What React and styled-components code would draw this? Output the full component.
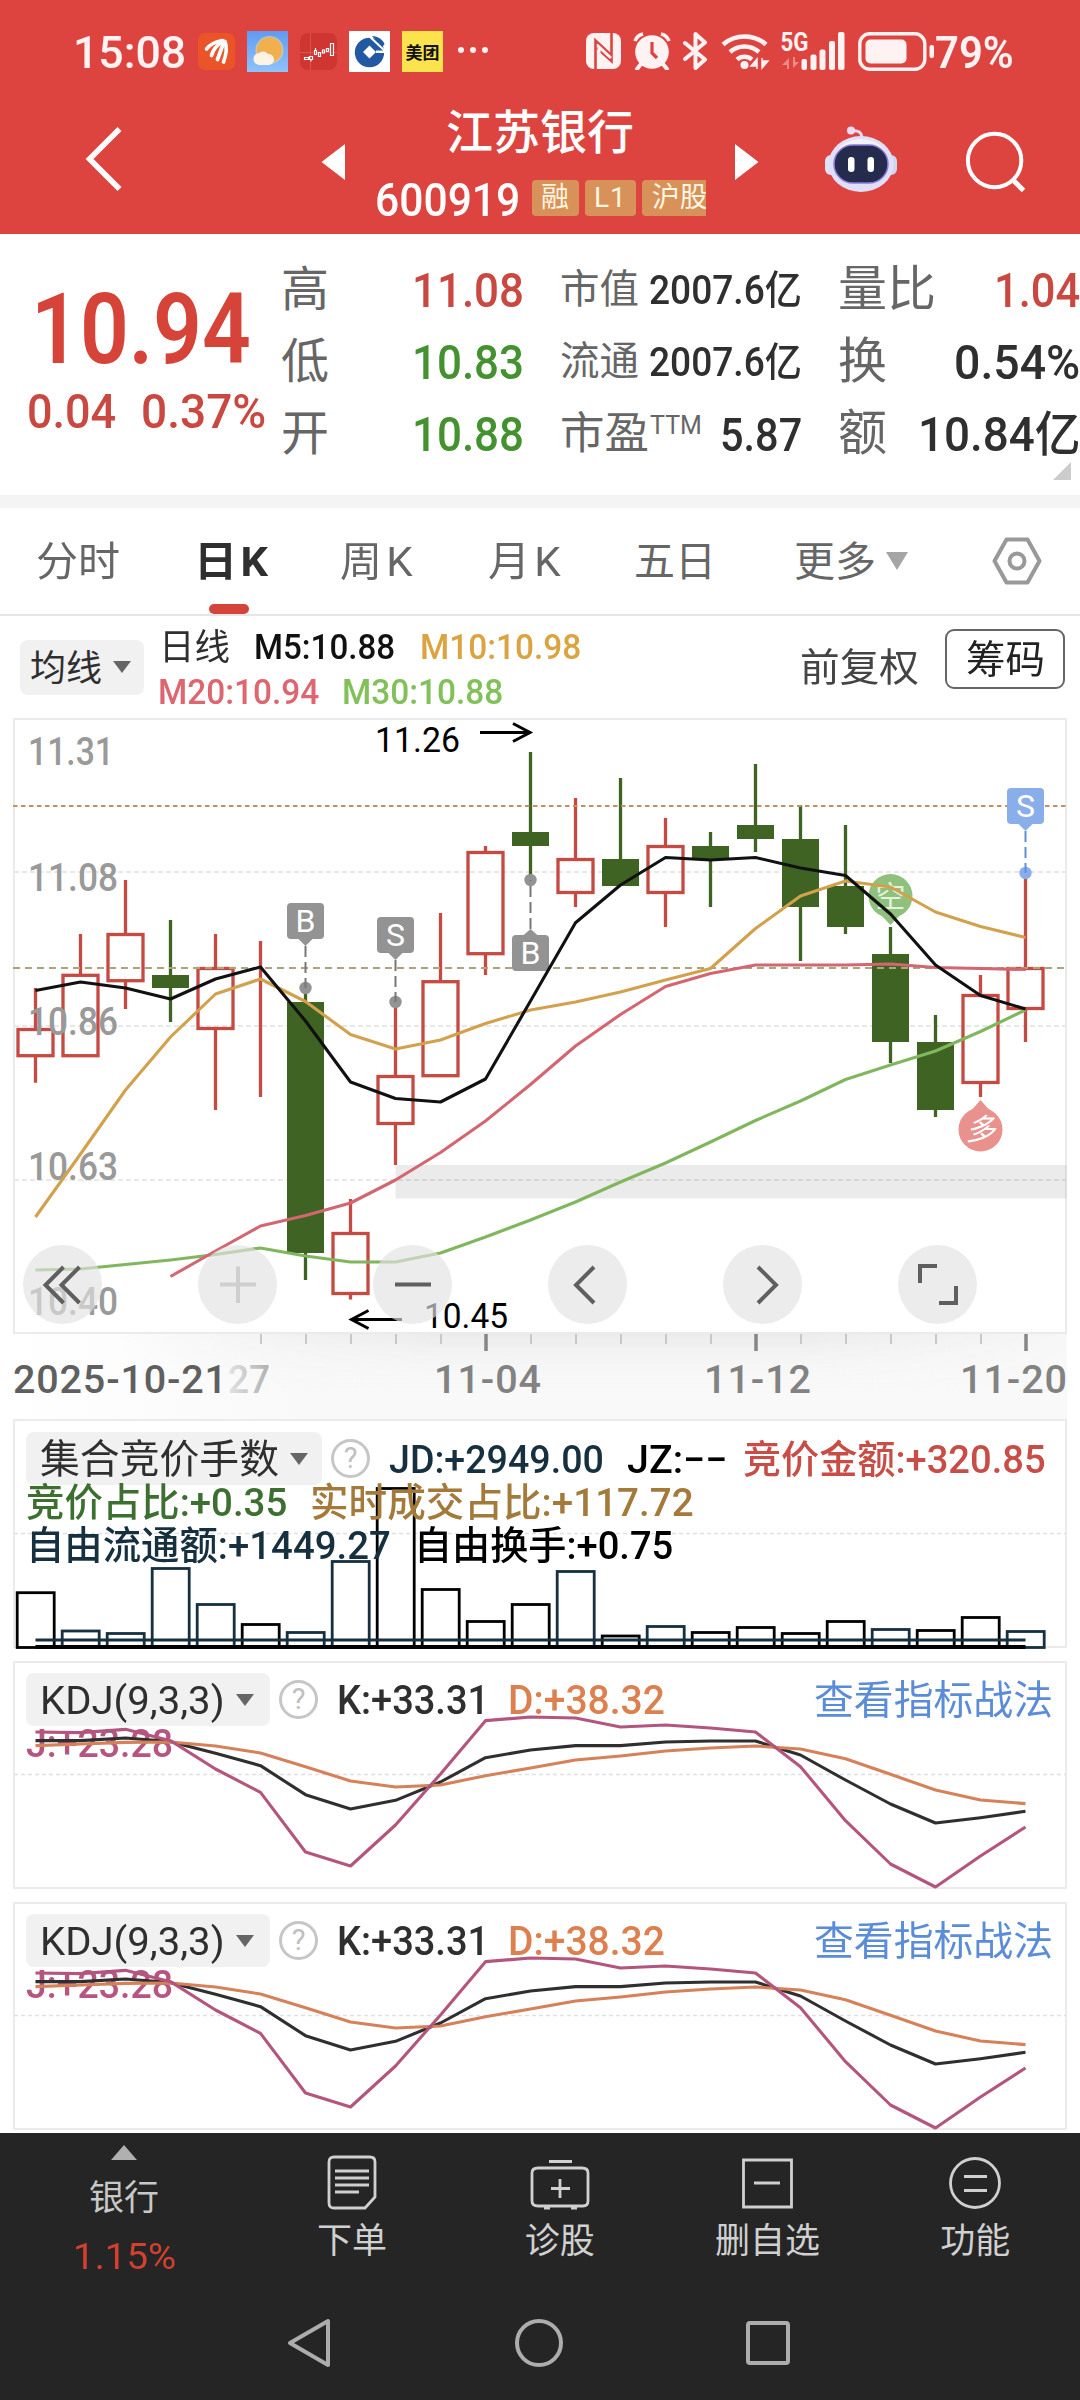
import React, { useLayoutEffect, useRef, useState } from 'react';
import styled, { createGlobalStyle } from 'styled-components';

const FONT = 'Roboto, "Noto Sans CJK SC", sans-serif';

const GlobalStyle = createGlobalStyle`
  * {
    box-sizing: border-box;
  }

  body {
    margin: 0;
    background: #fff;
    font-family: ${FONT};
  }

  svg {
    display: block;
    flex: none;
  }

  svg text {
    font-family: ${FONT};
  }
`;

const Page = styled.div`
  display: flex;
  flex-direction: column;
  width: 1080px;
  height: 2400px;
  overflow: hidden;
  background: #fff;
`;

/* ---------- Fitted text ---------- */

const FitBox = styled.span`
  display: block;
  flex: none;
  width: ${(p) => p.$w}px;
  margin-left: ${(p) => p.$ml || 0}px;
  padding-top: 3px;
  color: ${(p) => p.$color || 'inherit'};
  font-size: ${(p) => p.$size}px;
  font-weight: ${(p) => p.$weight || 400};
  letter-spacing: ${(p) => p.$ls || 0}px;
  line-height: ${(p) => p.$lh || p.$size}px;
  white-space: nowrap;
`;

const FitInner = styled.span`
  display: inline-block;
  transform-origin: left center;
`;

// Text squeezed or stretched horizontally so it always takes the given width
const Fit = ({ w, children, ...rest }) => {
  const ref = useRef(null);
  const [scale, setScale] = useState(1);

  useLayoutEffect(() => {
    setScale(w / ref.current.offsetWidth);
  }, [w, children]);

  return (
    <FitBox $w={w} {...rest}>
      <FitInner ref={ref} style={{ transform: `scaleX(${scale})` }}>
        {children}
      </FitInner>
    </FitBox>
  );
};

/* ---------- Status bar ---------- */

const Header = styled.header`
  flex: none;
  height: 234px;
  background: #dd4440;
  color: #fff;
`;

const StatusBar = styled.div`
  display: flex;
  align-items: center;
  justify-content: space-between;
  height: 102px;
  padding: 0 66px 0 73px;
  color: #fff2f2;
`;

const StatusGroup = styled.div`
  display: flex;
  align-items: center;
  gap: ${(p) => p.$gap}px;
`;

const AppBadge = styled.span`
  display: flex;
  align-items: center;
  justify-content: center;
  width: ${(p) => p.$size}px;
  height: ${(p) => p.$size}px;
  border-radius: ${(p) => p.$radius || 0}px;
  background: ${(p) => p.$bg};
  color: #111;
  font-size: 17px;
  font-weight: 700;
`;

const AppIcons = () => (
  <>
    <AppBadge $size={37} $radius={7} $bg="#eb5328">
      <svg width="37" height="37" viewBox="0 0 37 37" fill="none" stroke="#fff" strokeLinecap="round">
        <path d="M8.500 16C12 11 17 9 24 7.500" strokeWidth="3.600" />
        <path d="M13.500 22.500C15 16.500 19 12 25 8" strokeWidth="3.800" />
        <path d="M19.500 26.500C22 20 24 14 26 8.500" strokeWidth="3.800" />
        <path d="M25.500 29C28.500 21 29.500 15 27 8.500" strokeWidth="3.600" />
      </svg>
    </AppBadge>
    <AppBadge $size={41} $bg="linear-gradient(#5f9bf2, #8fc3fb)">
      <svg width="41" height="41" viewBox="0 0 41 41">
        <circle cx="22.500" cy="19" r="14" fill="#f6d58f" opacity="0.6" />
        <circle cx="22.500" cy="19" r="12.500" fill="#f0b04f" />
        <path d="M13 34a6 6 0 0 1-1-12 6 6 0 0 1 9 1 5.500 5.500 0 1 1 1 11z" fill="#fdf3e4" />
      </svg>
    </AppBadge>
    <AppBadge $size={37} $radius={8} $bg="#cf3531">
      <svg width="37" height="37" viewBox="0 0 37 37" fill="none" stroke="#fff" strokeWidth="1.200">
        <path d="M0 19.500h37M10.500 0v37" stroke="#e0605c" strokeWidth="0.700" />
        <path d="M4.500 24.500h4v2h-4zM9.500 23.500h3v3h-3zM11 26.500v2M14.500 17.500h2v4h-2zM15.500 15v2M18.500 19.500h2v4h-2zM22.500 17h2v3h-2zM26.500 15.500h2v3h-2zM30.500 10.500h3v12h-3z" />
      </svg>
    </AppBadge>
    <AppBadge $size={41} $bg="#fff">
      <svg width="41" height="41" viewBox="0 0 41 41">
        <circle cx="20.500" cy="21.500" r="14.700" fill="#2359a3" />
        <path d="M20.500 14.500l6.500 6.500-6.500 6.500-6.500-6.500zM27 19.500h10v2.500h-10z" fill="#fff" />
        <path d="M19.500 4.500l16 15" stroke="#fff" strokeWidth="2" />
        <path d="M23 5c6 0 11 4 12.500 8l-2 3z" fill="#2359a3" />
      </svg>
    </AppBadge>
  </>
);

const StatusIcons = () => (
  <>
    <svg width="35" height="36" viewBox="0 0 35 36">
      <rect width="35" height="36" rx="8" fill="#fff2f2" />
      <path d="M9.500 36V7.500L25 22" fill="none" stroke="#dd4440" strokeWidth="2.600" />
      <path d="M25.500 0v28L11 15" fill="none" stroke="#dd4440" strokeWidth="2.600" />
      <path d="M13 31V14l12 11" fill="none" stroke="#fff2f2" strokeWidth="3" />
    </svg>
    <svg width="38" height="38" viewBox="0 0 38 38" fill="none" stroke="#fff2f2">
      <circle cx="19" cy="20" r="16.800" fill="#fff2f2" stroke="none" />
      <path d="M2 9a11 11 0 0 1 8-7M36 9a11 11 0 0 0-8-7" strokeWidth="3.600" />
      <path d="M8 32l-4 5M30 32l4 5" strokeWidth="4" strokeLinecap="round" />
      <path d="M19 10v11l5 5" stroke="#dd4440" strokeWidth="3.200" />
    </svg>
    <svg width="26" height="38" viewBox="0 0 26 38" fill="none" stroke="#fff2f2" strokeWidth="4" strokeLinejoin="round" strokeLinecap="round">
      <path d="M2 11l20 16.500-9.500 8.500V2L22 10.500 2 27" />
    </svg>
    <svg width="49" height="38" viewBox="0 0 49 38" fill="none" stroke="#fff2f2" strokeWidth="4.600">
      <path d="M2 12.500a33 33 0 0 1 43 0M9 20a22 22 0 0 1 29 0M16 27.500a11.500 11.500 0 0 1 15 0" />
      <circle cx="23.500" cy="33" r="4" fill="#fff2f2" stroke="none" />
      <path d="M36 37V27l-6 7h6M41 26v10l6-7h-6" fill="#fff2f2" strokeWidth="1.500" />
    </svg>
    <svg width="64" height="40" viewBox="0 0 64 40" fill="#fff2f2" overflow="visible">
      <text x="-1.500" y="20" fontSize="26" fontWeight="700" textLength="28" lengthAdjust="spacingAndGlyphs">5G</text>
      <path d="M7 38V27l-7 7h5v4zM11 26v11l6-6h-4v-5z" fill="#f08a86" />
      <rect x="19.500" y="28" width="5.500" height="11" rx="2" />
      <rect x="28.500" y="23.500" width="6" height="15.500" rx="2" />
      <rect x="37.500" y="18.500" width="6" height="20.500" rx="2" />
      <rect x="47" y="10" width="6" height="29" rx="2" />
      <rect x="56" y="1" width="6.500" height="38" rx="2" />
    </svg>
    <svg width="77" height="39" viewBox="0 0 77 39">
      <rect x="1.800" y="1.800" width="65" height="35.500" rx="10" fill="none" stroke="#fff2f2" strokeWidth="3.400" />
      <rect x="7.500" y="7.500" width="41" height="24" rx="5" fill="#fff2f2" />
      <rect x="71.500" y="13" width="4.500" height="13" rx="2" fill="#fff2f2" />
    </svg>
  </>
);

/* ---------- Title bar ---------- */

const TitleBar = styled.div`
  display: flex;
  height: 132px;
  padding-left: 85px;
`;

const IconSlot = styled.span`
  flex: none;
  width: ${(p) => p.$w}px;
  margin-top: ${(p) => p.$mt}px;
  margin-left: ${(p) => p.$ml || 0}px;
`;

const TitleBlock = styled.div`
  display: flex;
  flex-direction: column;
  align-items: center;
  width: 390px;
  padding-top: 3px;
`;

const StockName = styled.h1`
  margin: 0;
  font-size: 47px;
  font-weight: 500;
  line-height: 55px;
`;

const CodeRow = styled.div`
  display: flex;
  align-items: center;
  gap: 6px;
  width: 331px;
  height: 60px;
  margin-top: 8px;
  overflow: hidden;
`;

const Tag = styled.span`
  flex: none;
  height: 36px;
  padding: 0 9.5px;
  border-radius: 4px;
  background: #d89158;
  color: #fff5e0;
  font-size: 28px;
  line-height: 35px;
  letter-spacing: ${(p) => p.$ls || 0}px;
`;

/* ---------- Quote ---------- */

const RED = '#c94841';
const GREEN = '#44912f';
const INK = '#2f2f2f';

const Quote = styled.section`
  position: relative;
  display: flex;
  flex: none;
  height: 261px;
  overflow: hidden;
`;

const PriceBlock = styled.div`
  width: 281px;
  padding-top: 44px;
`;

const ChangeRow = styled.div`
  display: flex;
  margin-top: 5px;
`;

const QuoteColumn = styled.div`
  flex: none;
  width: ${(p) => p.$w}px;
  margin-right: ${(p) => p.$mr || 0}px;
  padding-top: 19px;
`;

const QuoteRow = styled.div`
  display: flex;
  align-items: center;
  justify-content: space-between;
  height: 72px;
`;

const QuoteLabel = styled.span`
  display: flex;
  padding-top: 2px;
  color: #666;
  font-size: ${(p) => p.$size || 48}px;
  line-height: 72px;

  sup {
    margin-left: 1px;
    font-size: 25px;
    line-height: 56px;
  }
`;

const Corner = styled.i`
  position: absolute;
  right: 9px;
  bottom: 15px;
  border-left: 18px solid transparent;
  border-bottom: 18px solid #ccc;
`;

const Divider = styled.div`
  flex: none;
  height: 13px;
  background: #f4f4f4;
`;

/* ---------- Period tabs ---------- */

const Tabs = styled.nav`
  display: flex;
  flex: none;
  align-items: center;
  height: 108px;
  padding-left: 36px;
  border-bottom: 2px solid #e6e6e6;
`;

const Tab = styled.span`
  position: relative;
  display: flex;
  flex: none;
  align-items: center;
  gap: 10px;
  width: ${(p) => p.$w}px;
  height: 106px;
  color: ${(p) => (p.$active ? INK : '#666')};

  &::after {
    content: '';
    display: ${(p) => (p.$active ? 'block' : 'none')};
    position: absolute;
    left: 15px;
    bottom: 0;
    width: 40px;
    height: 10px;
    border-radius: 5px;
    background: #d5443a;
  }
`;

const Caret = styled.i`
  flex: none;
  width: 0;
  height: 0;
  border: ${(p) => p.$half}px solid transparent;
  border-top: ${(p) => p.$h}px solid ${(p) => p.$color || '#666'};
  border-bottom: 0;
`;

/* ---------- Chart header ---------- */

const ChartHeader = styled.div`
  display: flex;
  flex: none;
  align-items: center;
  height: 102px;
  padding-left: 20px;
`;

const Picker = styled.span`
  display: flex;
  flex: none;
  align-items: center;
  gap: 11px;
  width: ${(p) => p.$w}px;
  height: ${(p) => p.$h || 53}px;
  padding-left: ${(p) => p.$pl || 14}px;
  border-radius: 8px;
  background: #f1f1f1;
  color: ${INK};
`;

const Averages = styled.div`
  flex: none;
  width: 656px;
  padding: 4px 0 0 15px;
`;

const AverageRow = styled.div`
  display: flex;
  align-items: center;
  height: 45px;
`;

const ChipButton = styled.span`
  display: flex;
  flex: none;
  align-items: center;
  justify-content: center;
  width: 120px;
  height: 60px;
  margin: -16px 0 0 26px;
  border: 2px solid #666;
  border-radius: 9px;
  color: #222;
`;

/* ---------- Candle chart ---------- */

const ChartArea = styled.section`
  position: relative;
  flex: none;
  height: 701px;
`;

const Controls = styled.div`
  position: absolute;
  top: 527px;
  left: 23px;
  display: flex;
  gap: 96px;
`;

const RoundButton = styled.span`
  display: flex;
  align-items: center;
  justify-content: center;
  width: 79px;
  height: 79px;
  border-radius: 50%;
  background: rgba(226, 226, 226, 0.65);
  color: ${(p) => (p.$disabled ? '#cfcfcf' : '#5f5f5f')};
`;

const STEP = 45;
const xAt = (i) => 35.5 + STEP * i;
const toPoints = (ys, from = 0, yOf = (v) => v) =>
  ys.map((y, i) => `${xAt(i + from)},${yOf(y)}`).join(' ');

// [up, high, body top, body bottom, low]
const candles = [
  [1, 288, 329.5, 355.7, 382.700],
  [1, 234, 275.3, 355.7, 356],
  [1, 180, 234.5, 280.7, 309],
  [0, 220, 275, 288, 322],
  [1, 234, 268.5, 328.5, 410],
  [1, 241, 268, 268, 397],
  [0, 288, 302, 553, 580],
  [1, 499, 533.5, 593.5, 599.5],
  [1, 302, 376.5, 423.5, 465],
  [1, 213, 281.7, 375.7, 376],
  [1, 146, 152.5, 253.700, 275],
  [0, 52, 132, 146, 180],
  [1, 98, 159.5, 192.5, 207],
  [0, 78, 159, 186, 186],
  [1, 118, 146.5, 192.5, 227],
  [0, 132, 146, 159, 207],
  [0, 64, 125, 139, 152],
  [0, 105, 139, 207, 261],
  [0, 125, 186, 227, 234],
  [0, 227, 254, 342, 363],
  [0, 315, 342, 410, 417],
  [1, 275, 295.5, 382.5, 397],
  [1, 173, 268.5, 308.5, 342],
];

const ma5 = [290.5, 282, 288, 299, 279, 267, 321, 382, 398.5, 402, 379, 301, 222.7, 185, 157.5, 160, 157.5, 168, 175.5, 214, 265, 295.5, 309];
const ma10 = [517, 454, 390, 337, 294, 279, 301.5, 334.5, 349, 340, 323.5, 310, 302, 292, 280, 268.5, 228.5, 196, 181, 187, 212, 226.5, 237.5];
const ma20 = [576.5, 551, 526, 515.5, 503, 480, 452.5, 421, 384.5, 346, 314.5, 286.5, 273.5, 265, 265, 265, 264, 267.5, 268.5, 269.5];
const ma30 = [570, 569, 564.5, 560, 554.5, 548, 556, 562, 562, 553, 537, 520, 502, 482, 463, 442, 420.5, 401, 379.5, 365, 351, 331.5, 310];

const Candle = ({ i, data }) => {
  const [up, high, top, bottom, low] = data;
  const x = xAt(i);
  const color = up ? '#c44a42' : '#3f6322';
  return (
    <g stroke={color} strokeWidth="3.300" fill="none">
      <path d={`M${x} ${high}V${top}M${x} ${bottom}V${low}`} />
      {up ? (
        <rect x={x - 17.5} y={top} width="35" height={bottom - top} />
      ) : (
        <rect x={x - 18.5} y={top} width="37" height={bottom - top} fill={color} stroke="none" />
      )}
    </g>
  );
};

// Buy / sell flag with a dashed stem to the candle
const TradeFlag = ({ i, top, dot, letter, color = '#939393', stem = '#777', below }) => {
  const x = xAt(i);
  const tip = below ? top - 6 : top + 43;
  const base = below ? top + 1 : top + 35;
  return (
    <g>
      <circle cx={x} cy={dot} r="6.200" fill={color} />
      <path d={`M${x} ${tip}V${dot}`} stroke={stem} strokeWidth="2" strokeDasharray="11 5" />
      <path d={`M${x - 8} ${base}L${x} ${tip}L${x + 8} ${base}z`} fill={color} />
      <rect x={x - 18.5} y={top} width="37" height="36" rx="4" fill={color} />
      <text x={x} y={top + 29} fontSize="32" fill="#fff" textAnchor="middle">{letter}</text>
    </g>
  );
};

const axisLabels = [
  ['11.31', 65, 86],
  ['11.08', 191, 90],
  ['10.86', 334.5, 90],
  ['10.63', 479.5, 90],
  ['10.40', 615, 90],
];

const dateLabels = [
  [434, '11-04', 107],
  [704, '11-12', 107],
  [960, '11-20', 107],
];

const CandleChart = () => (
  <svg width="1080" height="701" viewBox="0 18 1080 701">
    <defs>
      <linearGradient id="axisX" gradientUnits="userSpaceOnUse" x1="14" y1="0" x2="300" y2="0">
        <stop offset="0" stopColor="#fff" />
        <stop offset="1" stopColor="#f9f9f9" />
      </linearGradient>
      <linearGradient id="axisY" x1="0" y1="0" x2="0" y2="1">
        <stop offset="0" stopColor="#ebebeb" />
        <stop offset="1" stopColor="#f9f9f9" stopOpacity="0" />
      </linearGradient>
      <linearGradient id="fadeX" gradientUnits="userSpaceOnUse" x1="14" y1="0" x2="1066" y2="0">
        <stop offset="0.1" stopColor="#000" />
        <stop offset="0.4" stopColor="#fff" />
        <stop offset="0.75" stopColor="#fff" />
        <stop offset="1" stopColor="#222" />
      </linearGradient>
      <mask id="fade">
        <rect x="14" y="634" width="1052" height="85" fill="url(#fadeX)" />
      </mask>
      <linearGradient id="ghost" x1="0" y1="0" x2="1" y2="0">
        <stop offset="0" stopColor="#e2e2e2" />
        <stop offset="1" stopColor="#b0b0b0" />
      </linearGradient>
    </defs>

    <rect x="14" y="634" width="1053" height="85" fill="url(#axisX)" />
    <rect x="14" y="634" width="1053" height="60" fill="url(#axisY)" mask="url(#fade)" />
    <rect x="14" y="19" width="1052" height="614" fill="#fff" stroke="#ebebeb" strokeWidth="2" />

    {[172, 326, 480].map((y) => (
      <path key={y} d={`M14 ${y}H1066`} stroke="#e8e8e8" strokeWidth="2" strokeDasharray="5 3" />
    ))}

    {candles.map((c, i) => (
      <Candle key={i} i={i} data={c} />
    ))}

    <path d="M13 106H1066" stroke="#bd9468" strokeWidth="2" strokeDasharray="4.500 3.500" />
    <path d="M13 268H1066" stroke="#ada57a" strokeWidth="2" strokeDasharray="7 5" />
    <rect x="395.500" y="465" width="671" height="33.500" fill="#000" opacity="0.08" />

    <g fontSize="39.500" fontWeight="500" fill="#999">
      {axisLabels.map(([label, y, w]) => (
        <text key={label} x="28" y={y} textLength={w} lengthAdjust="spacingAndGlyphs">{label}</text>
      ))}
    </g>

    <g>
      <circle cx="890.500" cy="196" r="22" fill="#90c07d" />
      <path d="M880 214L890.500 225L901 214z" fill="#90c07d" />
      <text x="890.500" y="207" fontSize="30" fill="#e2f3da" textAnchor="middle">空</text>
    </g>
    <g>
      <circle cx="980.500" cy="429.500" r="22" fill="#e8918d" />
      <path d="M970 412L980.500 400L991 412z" fill="#e8918d" />
      <text x="980.500" y="440" fontSize="30" fontStyle="italic" fill="#fff" textAnchor="middle">多</text>
    </g>

    <TradeFlag i={6} top={203} dot={288} letter="B" />
    <TradeFlag i={8} top={217} dot={302} letter="S" />
    <TradeFlag i={11} top={235} dot={180} letter="B" below />
    <TradeFlag i={22} top={88} dot={173} letter="S" color="#8aaeea" stem="#5e8fd6" />

    <g fill="none" strokeWidth="3.100" strokeLinejoin="round">
      <polyline points={toPoints(ma30)} stroke="#80b75e" />
      <polyline points={toPoints(ma20, 3)} stroke="#d26671" />
      <polyline points={toPoints(ma10)} stroke="#d2a14d" />
      <polyline points={toPoints(ma5)} stroke="#111" />
    </g>

    <g fill="none" stroke="#000" strokeWidth="3">
      <path d="M480 32.500H529M513 23.500L530 32.500L513 41.500" />
      <path d="M402 619.500H352M368.500 610.500L351.500 619.500L368.500 628.500" />
    </g>
    <g fontSize="35" fill="#000">
      <text x="375" y="51.700" textLength="85" lengthAdjust="spacingAndGlyphs">11.26</text>
      <text x="424" y="627.500" textLength="84" lengthAdjust="spacingAndGlyphs">10.45</text>
    </g>

    {candles.map((_, i) => {
      if (i < 5) return null;
      const major = i === 10 || i === 16 || i === 22;
      return (
        <path
          key={i}
          d={`M${xAt(i) + 0.5} 634V${major ? 651 : 644}`}
          stroke={major ? '#858585' : '#c8c8c8'}
          strokeWidth={major ? 3.5 : 2}
        />
      );
    })}

    <g fontSize="39.500" fontWeight="500" fill="#828282">
      <text x="13" y="693" fill="#5f5f5f" textLength="214" lengthAdjust="spacing">2025-10-21</text>
      <text x="228" y="693" fill="url(#ghost)" textLength="42" lengthAdjust="spacingAndGlyphs">27</text>
      {dateLabels.map(([x, label, w]) => (
        <text key={label} x={x} y="693" textLength={w} lengthAdjust="spacing">{label}</text>
      ))}
    </g>
  </svg>
);

const controlIcons = [
  'M19.500 2L1.500 20L19.500 38M35.500 2L17.500 20L35.500 38',
  'M1 19.500H37M19 1.500V38',
  'M1 19.500H37',
  'M25 2L7 20L25 38',
  'M14 2L32 20L14 38',
  'M1 18V1H18M37 21V38H20',
];

/* ---------- Indicator panels ---------- */

const Panel = styled.section`
  position: relative;
  flex: none;
  height: ${(p) => p.$h}px;
`;

const Legend = styled.div`
  position: absolute;
  top: ${(p) => p.$top}px;
  left: 26px;
  right: 0;
`;

const LegendRow = styled.div`
  display: flex;
  align-items: center;
  height: 43px;
`;

const Help = styled.span`
  display: flex;
  flex: none;
  align-items: center;
  justify-content: center;
  width: 39px;
  height: 39px;
  margin-left: 9px;
  border: 3px solid #c6c6c6;
  border-radius: 50%;
  color: #c0c0c0;
  font-size: 29px;
  line-height: 33px;
`;

const NAVY = '#16303f';

// [top of the bar, colour]
const bars = [
  [173.7, '#000'], [212, NAVY], [214.5, NAVY], [149.5, NAVY], [185.5, NAVY], [205.5, '#000'],
  [213.5, NAVY], [142.5, NAVY], [69.5, '#000'], [170.5, '#000'], [202.5, '#000'], [185.5, '#000'],
  [152.5, NAVY], [217, '#000'], [207.5, NAVY], [213.5, '#000'], [208.5, '#000'], [214.5, '#000'],
  [202.5, '#000'], [210.5, NAVY], [211.5, '#000'], [198.5, '#000'], [212.5, NAVY],
];

const AuctionPanel = () => (
  <Panel $h={242}>
    <svg width="1080" height="242" viewBox="0 0 1080 242">
      <rect x="14" y="1" width="1052" height="227" fill="#fff" stroke="#ebebeb" strokeWidth="2" />
      <path d="M14 114.500H1066" stroke="#e0e0e0" strokeWidth="1.300" strokeDasharray="4 3" />
      {bars.map(([top, color], i) => (
        <rect key={i} x={xAt(i) - 18.3} y={top} width="37" height={228.5 - top} fill="none" stroke={color} strokeWidth="2.800" />
      ))}
      <path d="M35.500 221H1025.500" stroke={NAVY} strokeWidth="2.800" />
      <path d="M35.500 228H1025.500" stroke="#000" strokeWidth="4" />
    </svg>
    <Legend $top={18}>
      <LegendRow>
        <Picker $w={296}>
          <Fit w={239} $size={40} $lh={50}>集合竞价手数</Fit>
          <Caret $half={9} $h={12} />
        </Picker>
        <Help>?</Help>
        <Fit w={215} $ml={19} $size={39} $weight={500} $color={NAVY}>JD:+2949.00</Fit>
        <Fit w={100} $ml={23} $size={39} $weight={500} $color="#000">JZ:−−</Fit>
        <Fit w={303} $ml={16} $size={39} $weight={500} $color="#c94d47">竞价金额:+320.85</Fit>
      </LegendRow>
      <LegendRow>
        <Fit w={261} $size={39} $weight={500} $color="#3d7030">竞价占比:+0.35</Fit>
        <Fit w={384} $ml={23} $size={39} $weight={500} $color="#a37a3a">实时成交占比:+117.72</Fit>
      </LegendRow>
      <LegendRow>
        <Fit w={365} $size={39} $weight={500} $color={NAVY}>自由流通额:+1449.27</Fit>
        <Fit w={259} $ml={23} $size={39} $weight={500} $color="#000">自由换手:+0.75</Fit>
      </LegendRow>
    </Legend>
  </Panel>
);

const kLine = [272, 272, 264, 275, 310, 347, 434, 477, 451, 396, 323, 300, 287, 287, 276, 273, 273, 315, 390, 462, 519, 503, 484];
const dLine = [287, 282, 277, 276, 288, 309, 350, 393, 411, 405, 377, 354, 330, 318, 303, 294, 288, 297, 326, 373, 420, 450, 461];
const jLine = [246, 248, 238, 272, 357, 427, 606, 648, 525, 372, 212, 201, 204, 231, 225, 234, 246, 350, 512, 642, 711, 618, 531];
const kdjY = (v) => v / 3 - 11;

const Curves = styled.svg`
  position: relative;
`;

const KdjPanel = ({ height }) => (
  <Panel $h={height}>
    <Legend $top={17}>
      <LegendRow>
        <Picker $w={244}>
          <Fit w={185} $size={39}>KDJ(9,3,3)</Fit>
          <Caret $half={9} $h={12} />
        </Picker>
        <Help>?</Help>
        <Fit w={152} $ml={19} $size={40} $weight={500} $color={INK}>K:+33.31</Fit>
        <Fit w={157} $ml={19} $size={40} $weight={500} $color="#dd8050">D:+38.32</Fit>
        <Fit w={239} $ml={149} $size={40} $color="#5b8cd8">查看指标战法</Fit>
      </LegendRow>
      <LegendRow>
        <Fit w={147} $size={39} $weight={500} $color="#b65680">J:+23.28</Fit>
      </LegendRow>
    </Legend>
    <Curves width="1080" height={height} viewBox={`0 0 1080 ${height}`}>
      <rect x="14" y="1" width="1052" height="226" fill="none" stroke="#ebebeb" strokeWidth="2" />
      <path d="M14 113.500H1066" stroke="#e0e0e0" strokeWidth="1.300" strokeDasharray="4 3" />
      <g fill="none" strokeWidth="3.100" strokeLinejoin="round">
        <polyline points={toPoints(kLine, 0, kdjY)} stroke="#2f2f2f" />
        <polyline points={toPoints(dLine, 0, kdjY)} stroke="#d5815a" />
        <polyline points={toPoints(jLine, 0, kdjY)} stroke="#b3557d" />
      </g>
    </Curves>
  </Panel>
);

/* ---------- Bottom ---------- */

const Footer = styled.footer`
  flex: 1;
  background: #252525;
  color: #d0d0d0;
`;

const ActionBar = styled.div`
  display: flex;
  height: 147px;
`;

const Action = styled.div`
  display: flex;
  flex-direction: column;
  align-items: center;
  width: ${(p) => p.$w || 207.8}px;
  padding-top: 22px;
  font-size: 35px;
  line-height: 42px;

  svg {
    margin-bottom: 10px;
  }
`;

const Sector = styled(Action)`
  padding-top: 12px;
  color: #c8c8c8;

  i {
    border: 13px solid transparent;
    border-top: 0;
    border-bottom: 15px solid #b0b0b0;
    margin-bottom: 18px;
  }

  span + span {
    margin-top: 15px;
  }
`;

const SystemNav = styled.div`
  display: flex;
  align-items: center;
  gap: 183px;
  height: 120px;
  margin-top: 3px;
  padding-left: 286px;
`;

const actions = [
  ['下单', 'M7 2H43Q48 2 48 7V42L38 53H7Q2 53 2 48V7Q2 2 7 2zM8 16H42M8 23H42M8 30H42M8 37H32'],
  ['诊股', 'M3 13H47Q53 13 53 18V46Q53 51 48 51H3Q-3 51 -3 46V18Q-3 13 3 13zM14 6.500H37M25 24V43M16 33.500H35M9 53H15M36 53H42'],
  ['删自选', 'M1.500 5H49.500V52H1.500zM12 28H38'],
  ['功能', 'M25 3.500A24.500 24.500 0 1 0 25 52.500A24.500 24.500 0 1 0 25 3.500zM14 21.500H37M14 35.500H37'],
];

const App = () => (
  <Page>
    <GlobalStyle />
    <Header>
      <StatusBar>
        <StatusGroup $gap={12}>
          <Fit w={113} $size={45} $weight={500}>15:08</Fit>
          <AppIcons />
          <AppBadge $size={41} $bg="#fbe34e">美团</AppBadge>
          <svg width="36" height="8" viewBox="0 0 36 8" fill="#fff2f2">
            <circle cx="6" cy="3" r="3" />
            <circle cx="18" cy="3" r="3" />
            <circle cx="30" cy="3" r="3" />
          </svg>
        </StatusGroup>
        <StatusGroup $gap={12}>
          <StatusIcons />
          <Fit w={79} $ml={-12} $size={45} $weight={600}>79%</Fit>
        </StatusGroup>
      </StatusBar>

      <TitleBar>
        <IconSlot $w={38} $mt={25}>
          <svg width="38" height="66" viewBox="0 0 38 66" fill="none" stroke="#fff" strokeWidth="5.500">
            <path d="M34.500 2L4.500 32L34.500 62" />
          </svg>
        </IconSlot>
        <IconSlot $w={24} $mt={42} $ml={198}>
          <svg width="24" height="36" viewBox="0 0 24 36" fill="#fff"><path d="M0.500 18L24 0V36z" /></svg>
        </IconSlot>
        <TitleBlock>
          <StockName>江苏银行</StockName>
          <CodeRow>
            <Fit w={145} $size={47} $weight={500} $lh={54}>600919</Fit>
            <span />
            <Tag>融</Tag>
            <Tag $ls={1}>L1</Tag>
            <Tag>沪股</Tag>
          </CodeRow>
        </TitleBlock>
        <IconSlot $w={24} $mt={42}>
          <svg width="24" height="36" viewBox="0 0 24 36" fill="#fff"><path d="M23.500 18L0 0V36z" /></svg>
        </IconSlot>
        <IconSlot $w={72} $mt={23} $ml={66}>
          <svg width="72" height="68" viewBox="0 0 72 68">
            <path d="M26 6Q37 4 37 14" fill="none" stroke="#ead9ee" strokeWidth="3" />
            <circle cx="26" cy="5.500" r="4" fill="#e9dcf3" />
            <rect x="0" y="30" width="12" height="20" rx="6" fill="#dfe3fa" />
            <rect x="60" y="30" width="12" height="20" rx="6" fill="#cfd6f5" />
            <ellipse cx="36" cy="39" rx="32.500" ry="28" fill="#dfe0f8" />
            <ellipse cx="36" cy="34" rx="26" ry="20" fill="#f3f1fc" />
            <rect x="9" y="20" width="54" height="38" rx="19" fill="#252b4d" stroke="#8d7bd6" strokeWidth="1.500" />
            <rect x="23" y="32" width="6.500" height="15" rx="3.200" fill="#fff" />
            <rect x="42.500" y="32" width="6.500" height="15" rx="3.200" fill="#fff" />
          </svg>
        </IconSlot>
        <IconSlot $w={62} $mt={28} $ml={67}>
          <svg width="62" height="64" viewBox="0 0 62 64" fill="none" stroke="#fff" strokeWidth="4">
            <circle cx="30.600" cy="30.500" r="26.700" />
            <path d="M48 49L59.500 60.500" strokeWidth="5" />
          </svg>
        </IconSlot>
      </TitleBar>
    </Header>

    <Quote>
      <PriceBlock>
        <Fit w={220} $ml={31} $size={98} $weight={600} $color="#d54339">10.94</Fit>
        <ChangeRow>
          <Fit w={89} $ml={27} $size={49} $weight={500} $color={RED}>0.04</Fit>
          <Fit w={125} $ml={25} $size={49} $weight={500} $color={RED}>0.37%</Fit>
        </ChangeRow>
      </PriceBlock>
      <QuoteColumn $w={243} $mr={36}>
        <QuoteRow>
          <QuoteLabel>高</QuoteLabel>
          <Fit w={112} $size={49} $weight={500} $color={RED}>11.08</Fit>
        </QuoteRow>
        <QuoteRow>
          <QuoteLabel>低</QuoteLabel>
          <Fit w={112} $size={49} $weight={500} $color={GREEN}>10.83</Fit>
        </QuoteRow>
        <QuoteRow>
          <QuoteLabel>开</QuoteLabel>
          <Fit w={112} $size={49} $weight={500} $color={GREEN}>10.88</Fit>
        </QuoteRow>
      </QuoteColumn>
      <QuoteColumn $w={242} $mr={36}>
        <QuoteRow>
          <QuoteLabel $size={39.5}>市值</QuoteLabel>
          <Fit w={153} $size={40} $weight={500} $color={INK}>2007.6亿</Fit>
        </QuoteRow>
        <QuoteRow>
          <QuoteLabel $size={39.5}>流通</QuoteLabel>
          <Fit w={153} $size={40} $weight={500} $color={INK}>2007.6亿</Fit>
        </QuoteRow>
        <QuoteRow>
          <QuoteLabel $size={44.5}>市盈<sup>TTM</sup></QuoteLabel>
          <Fit w={82} $size={46} $weight={500} $color={INK}>5.87</Fit>
        </QuoteRow>
      </QuoteColumn>
      <QuoteColumn $w={242}>
        <QuoteRow>
          <QuoteLabel $size={49}>量比</QuoteLabel>
          <Fit w={86} $size={49} $weight={500} $color={RED}>1.04</Fit>
        </QuoteRow>
        <QuoteRow>
          <QuoteLabel $size={49}>换</QuoteLabel>
          <Fit w={126} $size={49} $weight={500} $color={INK}>0.54%</Fit>
        </QuoteRow>
        <QuoteRow>
          <QuoteLabel $size={49}>额</QuoteLabel>
          <Fit w={162} $size={48} $weight={500} $color={INK}>10.84亿</Fit>
        </QuoteRow>
      </QuoteColumn>
      <Corner />
    </Quote>

    <Divider />

    <Tabs>
      <Tab $w={158}><Fit w={84} $size={41}>分时</Fit></Tab>
      <Tab $w={146} $active><Fit w={77} $size={41} $weight={700} $ls={3}>日K</Fit></Tab>
      <Tab $w={148}><Fit w={77} $size={41} $ls={4}>周K</Fit></Tab>
      <Tab $w={146}><Fit w={77} $size={41} $ls={4}>月K</Fit></Tab>
      <Tab $w={160}><Fit w={82} $size={41}>五日</Fit></Tab>
      <Tab $w={198}>
        <Fit w={82} $size={41}>更多</Fit>
        <Caret $half={11.5} $h={18} $color="#a5a5a5" />
      </Tab>
      <svg width="50" height="48" viewBox="0 0 50 48" fill="none" stroke="#999" strokeWidth="4">
        <path d="M14.500 2.500H35.500L47.500 24L35.500 45.500H14.500L2.500 24z" strokeLinejoin="round" />
        <circle cx="25" cy="24" r="7.500" />
      </svg>
    </Tabs>

    <ChartHeader>
      <Picker $w={124} $h={55} $pl={10}>
        <Fit w={72} $size={36} $lh={50}>均线</Fit>
        <Caret $half={9} $h={12} />
      </Picker>
      <Averages>
        <AverageRow>
          <Fit w={71} $size={36} $color={INK}>日线</Fit>
          <Fit w={141} $ml={24} $size={35.5} $weight={500} $color="#111">M5:10.88</Fit>
          <Fit w={161} $ml={25} $size={35.5} $weight={500} $color="#d9a441">M10:10.98</Fit>
        </AverageRow>
        <AverageRow>
          <Fit w={161} $ml={-1} $size={35.5} $weight={500} $color="#dd6670">M20:10.94</Fit>
          <Fit w={161} $ml={23} $size={35.5} $weight={500} $color="#82c05a">M30:10.88</Fit>
        </AverageRow>
      </Averages>
      <Fit w={119} $size={39} $color="#444">前复权</Fit>
      <ChipButton><Fit w={79} $size={39}>筹码</Fit></ChipButton>
    </ChartHeader>

    <ChartArea>
      <CandleChart />
      <Controls>
        {controlIcons.map((d, i) => (
          <RoundButton key={i} $disabled={i === 1}>
            <svg width="38" height="40" viewBox="0 0 38 40" overflow="visible" fill="none" stroke="currentColor" strokeWidth="4">
              <path d={d} />
            </svg>
          </RoundButton>
        ))}
      </Controls>
    </ChartArea>

    <AuctionPanel />
    <KdjPanel height={241} />
    <KdjPanel height={231} />

    <Footer>
      <ActionBar>
        <Sector $w={248}>
          <i />
          <span>银行</span>
          <Fit w={103} $size={37} $color="#d2412f">1.15%</Fit>
        </Sector>
        {actions.map(([label, d]) => (
          <Action key={label}>
            <svg width="50" height="56" viewBox="0 0 50 56" overflow="visible" fill="none" stroke="currentColor" strokeWidth="2.800">
              <path d={d} />
            </svg>
            <span>{label}</span>
          </Action>
        ))}
      </ActionBar>
      <SystemNav>
        <svg width="46" height="52" viewBox="0 0 46 52" fill="none" stroke="#adadad" strokeWidth="4" strokeLinejoin="round">
          <path d="M42 4V48L4 26z" />
        </svg>
        <svg width="48" height="52" viewBox="0 0 48 52" fill="none" stroke="#adadad" strokeWidth="4">
          <circle cx="24" cy="26" r="22" />
        </svg>
        <svg width="46" height="52" viewBox="0 0 46 52" fill="none" stroke="#adadad" strokeWidth="4">
          <rect x="2" y="6" width="40" height="40" rx="2" />
        </svg>
      </SystemNav>
    </Footer>
  </Page>
);

export default App;
